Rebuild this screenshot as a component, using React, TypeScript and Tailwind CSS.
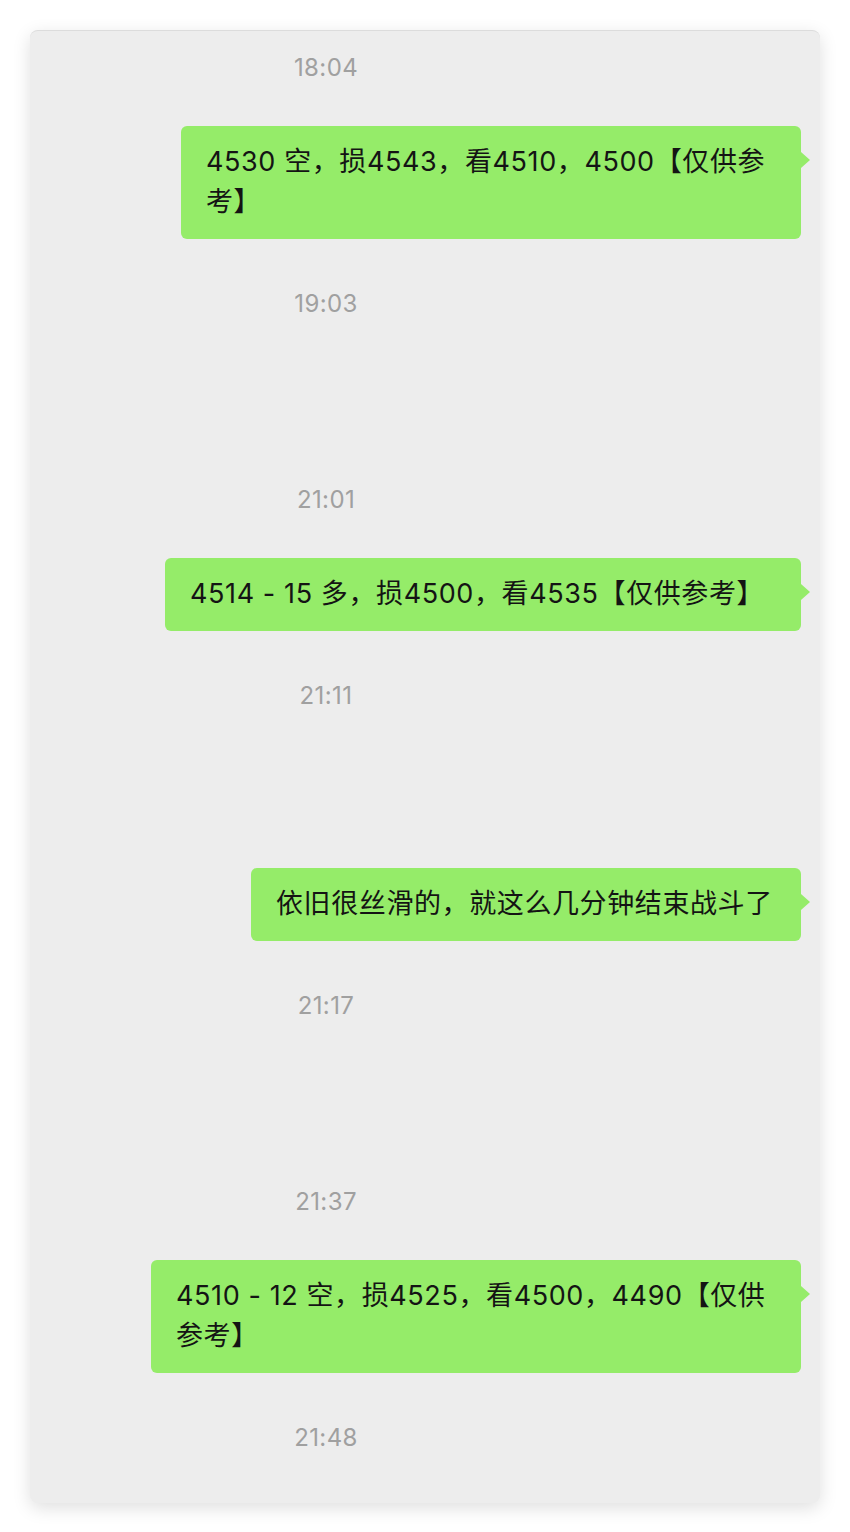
import React from "react";

type Item =
  | { kind: "time"; text: string; mt: string }
  | { kind: "msg"; text: string; mt: string; w: string };

const items: Item[] = [
  { kind: "time", text: "18:04", mt: "mt-0" },
  { kind: "msg", text: "4530 空，损4543，看4510，4500【仅供参考】", mt: "mt-[43px]", w: "w-[620px]" },
  { kind: "time", text: "19:03", mt: "mt-[50px]" },
  { kind: "time", text: "21:01", mt: "mt-[166px]" },
  { kind: "msg", text: "4514 - 15 多，损4500，看4535【仅供参考】", mt: "mt-[43px]", w: "w-[636px]" },
  { kind: "time", text: "21:11", mt: "mt-[50px]" },
  { kind: "msg", text: "依旧很丝滑的，就这么几分钟结束战斗了", mt: "mt-[157px]", w: "w-[550px]" },
  { kind: "time", text: "21:17", mt: "mt-[50px]" },
  { kind: "time", text: "21:37", mt: "mt-[166px]" },
  { kind: "msg", text: "4510 - 12 空，损4525，看4500，4490【仅供参考】", mt: "mt-[43px]", w: "w-[650px]" },
  { kind: "time", text: "21:48", mt: "mt-[50px]" },
];

const font = "font-['Inter','Noto_Sans_CJK_SC',sans-serif]";

function Time({ text, mt }: { text: string; mt: string }) {
  return (
    <div className={`${mt} w-[592px] h-[30px] text-center text-[24px] leading-[30px] tracking-[0.4px] text-[#a0a0a0]`}>
      {text}
    </div>
  );
}

function Bubble({ text, mt, w }: { text: string; mt: string; w: string }) {
  return (
    <div className={`${mt} flex justify-end pr-[19px]`}>
      <div
        className={`relative ${w} rounded-[6px] bg-[#95ec69] px-[25px] pt-[16px] pb-[17px] text-[27px] leading-[40px] tracking-[0.6px] text-[#141414]`}
      >
        {text}
        <span className="absolute left-full top-[26px] h-0 w-0 border-y-[8px] border-l-[9px] border-y-transparent border-l-[#95ec69]" />
      </div>
    </div>
  );
}

export default function App() {
  return (
    <div className={`min-h-[1532px] bg-white pt-[30px] pl-[30px] ${font}`}>
      <div className="w-[790px] rounded-[8px] bg-[#ededed] pt-[22px] pb-[50px] shadow-[0_5px_18px_rgba(0,0,0,0.13)] border-t border-[#dcdcdc]">
        {items.map((it, i) =>
          it.kind === "time" ? (
            <Time key={i} text={it.text} mt={it.mt} />
          ) : (
            <Bubble key={i} text={it.text} mt={it.mt} w={it.w} />
          ),
        )}
      </div>
    </div>
  );
}
